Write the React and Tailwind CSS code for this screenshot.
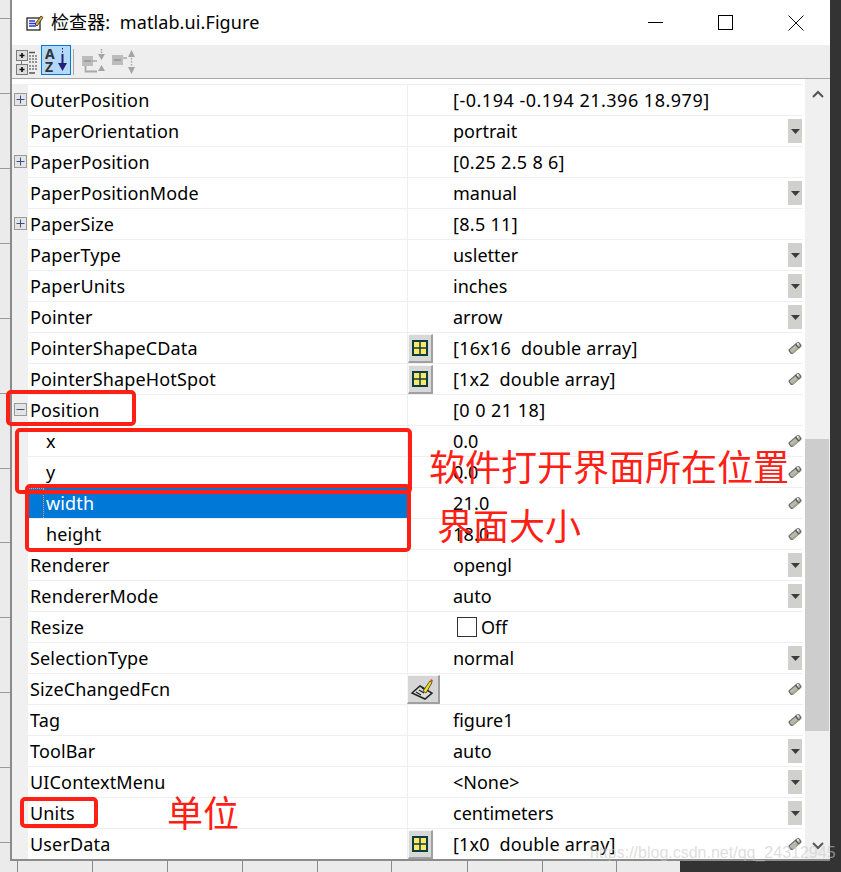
const rows = [
  { n: "OuterPosition", v: "[-0.194 -0.194 21.396 18.979]", exp: "+", t: "tracking-[0.5px]" },
  { n: "PaperOrientation", v: "portrait", r: "dd" },
  { n: "PaperPosition", v: "[0.25 2.5 8 6]", exp: "+", t: "tracking-[0.3px]" },
  { n: "PaperPositionMode", v: "manual", r: "dd" },
  { n: "PaperSize", v: "[8.5 11]", exp: "+", t: "tracking-[0.3px]" },
  { n: "PaperType", v: "usletter", r: "dd" },
  { n: "PaperUnits", v: "inches", r: "dd" },
  { n: "Pointer", v: "arrow", r: "dd" },
  { n: "PointerShapeCData", v: "[16x16  double array]", r: "pen", btn: "grid", t: "tracking-[0.25px]" },
  { n: "PointerShapeHotSpot", v: "[1x2  double array]", r: "pen", btn: "grid", t: "tracking-[0.2px]" },
  { n: "Position", v: "[0 0 21 18]", exp: "-", t: "tracking-[0.45px]" },
  { n: "x", v: "0.0", r: "pen", sub: true },
  { n: "y", v: "0.0", r: "pen", sub: true },
  { n: "width", v: "21.0", r: "pen", sub: true, sel: true, t: "tracking-[0.2px]" },
  { n: "height", v: "18.0", r: "pen", sub: true, t: "tracking-[0.2px]" },
  { n: "Renderer", v: "opengl", r: "dd" },
  { n: "RendererMode", v: "auto", r: "dd" },
  { n: "Resize", v: "Off", check: true },
  { n: "SelectionType", v: "normal", r: "dd" },
  { n: "SizeChangedFcn", v: "", r: "pen", btn: "cb" },
  { n: "Tag", v: "figure1", r: "pen" },
  { n: "ToolBar", v: "auto", r: "dd" },
  { n: "UIContextMenu", v: "<None>", r: "dd" },
  { n: "Units", v: "centimeters", r: "dd" },
  { n: "UserData", v: "[1x0  double array]", r: "pen", btn: "grid", t: "tracking-[0.2px]" },
];

function Expander({ kind }) {
  return (
    <svg width="13" height="13" viewBox="0 0 13 13">
      <rect x="0.5" y="0.5" width="12" height="12" fill="#e4e4e4" stroke="#9a9a9a" />
      <path d={kind === "+" ? "M2.5 6.5h8M6.5 2.5v8" : "M2.5 6.5h8"} stroke="#3b4f86" strokeWidth="1" />
    </svg>
  );
}

function Dropdown() {
  return (
    <div className="w-[14px] h-[24px] bg-[#d0d0cc] flex items-center justify-center">
      <svg width="9" height="5" viewBox="0 0 9 5"><path d="M0 0h9L4.5 5z" fill="#3c3c3c" /></svg>
    </div>
  );
}

function Pencil() {
  return (
    <svg width="16" height="16" viewBox="0 0 16 16">
      <g transform="rotate(-40 8 8)">
        <rect x="0" y="4.500" width="16" height="7" rx="2.500" fill="#6f6f6a" />
        <rect x="1.500" y="5.800" width="13" height="4.200" rx="1.500" fill="#b9b9b4" />
        <rect x="10.500" y="4.800" width="1.500" height="6.400" fill="#55554f" />
        <rect x="12.500" y="5.500" width="2" height="2" fill="#f2f2ee" />
        <rect x="2" y="9.800" width="9" height="1.600" fill="#a8a87e" />
      </g>
    </svg>
  );
}

function GridBtn() {
  return (
    <div className="w-[25px] h-[29px] mt-[1px] flex items-center justify-center bg-[#d8d8d8] border-r-2 border-b-2 border-l border-t border-r-[#a0a0a0] border-b-[#a0a0a0] border-l-[#f6f6f6] border-t-[#f6f6f6]">
      <svg width="16" height="16" viewBox="0 0 16 16">
        <rect x="1" y="1" width="14" height="14" fill="#f8e96a" stroke="#103c40" strokeWidth="2" />
        <path d="M8 1v14M1 8h14" stroke="#103c40" strokeWidth="1.500" />
      </svg>
    </div>
  );
}

function CallbackBtn() {
  return (
    <div className="w-[33px] h-[29px] mt-[1px] -ml-[1px] flex items-center justify-center bg-[#d6d6d6] border-r-2 border-b-2 border-l border-t border-r-[#a0a0a0] border-b-[#a0a0a0] border-l-[#f6f6f6] border-t-[#f6f6f6]">
      <svg width="26" height="22" viewBox="0 0 26 22">
        <path d="M2 15 10 8l12 7-7 6z" fill="#dcdcdc" stroke="#222" strokeWidth="1.500" />
        <path d="M6 14l5 3M9 12l5 3M12 10l5 3" stroke="#222" strokeWidth="1.200" />
        <path d="M13 13 20 3l2 1.500L16 15z" fill="#f2e11a" stroke="#333" strokeWidth="0.800" />
        <path d="M20 3l1-2 2 1.500-1 2z" fill="#e0482a" />
      </svg>
    </div>
  );
}

function Row({ row }) {
  return (
    <div className="flex h-[31px] shrink-0">
      <div className="w-[16px] bg-[#f0f0f0] flex items-center justify-center shrink-0">
        {row.exp && <Expander kind={row.exp} />}
      </div>
      <div
        className={`relative w-[379px] shrink-0 border-t flex items-center text-[18px] leading-none tracking-[0.15px] ${
          row.sel ? "bg-[#0078d7] border-t-[#f2f2f2] text-white" : "border-t-[#efefef] text-black"
        } ${row.sub ? "pl-[18px]" : "pl-[2px]"}`}
      >
        {row.sel && <div className="absolute left-0 top-0 bottom-0 w-[16px] border-t border-r border-dotted border-t-[#e8a060] border-r-[#e8a060]" />}
        {row.n}
      </div>
      <div className="w-[1px] bg-[#efefef] shrink-0" />
      <div className="relative flex-1 border-t border-t-[#efefef] flex items-center text-[18px] leading-none text-black">
        <div className="w-[45px] shrink-0 self-start">
          {row.btn === "grid" && <GridBtn />}
          {row.btn === "cb" && <CallbackBtn />}
        </div>
        {row.check ? (
          <div className="flex items-center ml-[4px] gap-[4px]">
            <div className="w-[20px] h-[20px] border border-[#333] bg-white" />
            <span>{row.v}</span>
          </div>
        ) : (
          <span className={`whitespace-pre ${row.t || ""}`}>{row.v}</span>
        )}
        <div className="ml-auto flex items-center justify-center w-[14px] mr-[1px]">
          {row.r === "dd" && <Dropdown />}
          {row.r === "pen" && <Pencil />}
        </div>
      </div>
    </div>
  );
}

function TreeIcon() {
  return (
    <svg width="22" height="26" viewBox="0 0 22 26">
      <path d="M5.500 11v5" stroke="#777" />
      <rect x="0.500" y="1.500" width="11" height="10" fill="#dedede" stroke="#7a7a7a" />
      <rect x="0.500" y="15.500" width="11" height="10" fill="#dedede" stroke="#7a7a7a" />
      <path d="M3.500 6.500h5M6 4v5M3.500 20.500h5M6 18v5" stroke="#111" strokeWidth="1.600" />
      <path d="M13 3.500h6M13 24h6" stroke="#555" strokeWidth="1.500" />
      <path d="M13 7h8M13 10h8M13 13h8M13 17h8M13 20h8" stroke="#777" strokeWidth="1.300" strokeDasharray="2 1" />
    </svg>
  );
}

function MoveIconDown() {
  return (
    <svg width="25" height="26" viewBox="0 0 25 26">
      <rect x="1" y="7" width="11" height="10" fill="#bcbcbc" />
      <path d="M3 12h7" stroke="#959595" strokeWidth="1.500" />
      <path d="M4.500 17v5.500H16" stroke="#a8a8a8" strokeWidth="1.800" fill="none" />
      <path d="M11 12h5" stroke="#a8a8a8" strokeWidth="1.500" />
      <path d="M17 5h7l-3.500 6zM17 22h7l-3.500-6z" fill="#a4a4a4" />
      <path d="M20.500 0v4" stroke="#a4a4a4" strokeWidth="1.500" strokeDasharray="1.500 1" />
    </svg>
  );
}

function MoveIconUp() {
  return (
    <svg width="25" height="27" viewBox="0 0 25 27">
      <rect x="1" y="7" width="11" height="10" fill="#bcbcbc" />
      <path d="M3 12h7" stroke="#959595" strokeWidth="1.500" />
      <path d="M12 10h4" stroke="#a8a8a8" strokeWidth="1.500" />
      <path d="M17 9h7L20.500 2zM17 19h7L20.500 26z" fill="#a4a4a4" />
      <path d="M20.500 10v8" stroke="#a4a4a4" strokeWidth="1.400" strokeDasharray="1.500 1.500" />
    </svg>
  );
}

function TitleIcon() {
  return (
    <svg width="18" height="18" viewBox="0 0 18 18">
      <rect x="1" y="4" width="13" height="12" fill="#fff" stroke="#111" strokeWidth="1.200" />
      <path d="M3 7h6M3 9.500h7M3 12h7" stroke="#2a35d8" strokeWidth="1.300" />
      <path d="M9 10 15 2l2 1.500L11 12z" fill="#d8b040" stroke="#222" strokeWidth="0.800" />
    </svg>
  );
}

function RedBox({ className }) {
  return <div className={`absolute border-[4px] border-[#ff2015] rounded-[5px] ${className}`} />;
}

export default function App() {
  return (
    <div
      className="relative w-[841px] h-[872px] overflow-hidden bg-[#ebebeb]"
      style={{ fontFamily: '"Noto Sans", "Noto Sans CJK SC", sans-serif' }}
    >
      <svg className="absolute inset-0" width="841" height="872">
        {[18, 93, 168, 243, 318, 393, 468, 542, 617, 692, 767, 842].map((y) => (
          <path key={y} d={`M0 ${y}.5H10`} stroke="#9a9a9a" />
        ))}
        {[17, 92, 167, 242, 317, 391, 467, 542, 616].map((x) => (
          <path key={x} d={`M${x}.5 860V872`} stroke="#8a8a8a" />
        ))}
        <rect x="680" y="860" width="161" height="12" fill="#333333" />
        <rect x="830" y="0" width="11" height="872" fill="#333333" />
        <rect x="680" y="0" width="161" height="1" fill="#333333" />
      </svg>

      <div className="relative ml-[10px] w-[820px] h-[861px] bg-white border-l-2 border-b-2 border-[#8b8b8b] flex flex-col">
        <div className="h-[45px] flex items-center shrink-0">
          <div className="ml-[14px] w-[18px] flex"><TitleIcon /></div>
          <span className="ml-[7px] mb-[2px] text-[18px] tracking-[0.1px] text-black leading-none">检查器:&nbsp;&nbsp;matlab.ui.Figure</span>
          <div className="ml-auto flex items-center h-full">
            <div className="w-[70px] flex justify-center"><div className="w-[15px] h-[1px] bg-black" /></div>
            <div className="w-[70px] flex justify-center mr-[1px]"><div className="w-[15px] h-[15px] border border-black" /></div>
            <div className="w-[69px] flex justify-center">
              <svg width="16" height="16" viewBox="0 0 16 16"><path d="M.5.500l15 15M15.500.500l-15 15" stroke="#111" /></svg>
            </div>
          </div>
        </div>

        <div className="h-[34px] bg-[#eeeeee] border-b border-b-[#a8a8a8] flex items-center shrink-0">
          <div className="ml-[3px] w-[24px] flex justify-center"><TreeIcon /></div>
          <div className="self-start ml-[2px] w-[30px] h-[30px] bg-[#b3d9f7] border border-[#0078d7] relative flex flex-col items-start pl-[3px] pt-[1px] text-[#333] text-[14px] font-bold leading-[13px]">
            <span>A</span>
            <span>Z</span>
            <svg className="absolute right-[3px] top-[2px]" width="9" height="25" viewBox="0 0 9 25">
              <path d="M4.500 0v6" stroke="#22227a" strokeDasharray="1.500 1.500" />
              <path d="M4.500 6v12" stroke="#22227a" strokeWidth="2" />
              <path d="M0 15h9l-4.500 8z" fill="#22227a" />
            </svg>
          </div>
          <div className="ml-[2px] w-[1px] h-[26px] bg-[#a8a8a8]" />
          <div className="ml-[7px] flex"><MoveIconDown /></div>
          <div className="ml-[5px] flex"><MoveIconUp /></div>
        </div>

        <div className="flex flex-1 min-h-0 pt-[5px]">
          <div className="flex flex-col w-[791px] shrink-0">
            {rows.map((row) => (
              <Row key={row.n} row={row} />
            ))}
          </div>
          <div className="-mt-[5px] ml-[2px] w-[25px] bg-[#f0f0f0] flex flex-col items-center relative">
            <svg className="mt-[11px]" width="12" height="8" viewBox="0 0 12 8"><path d="M1 7l5-5 5 5" fill="none" stroke="#555" strokeWidth="2" /></svg>
            <div className="absolute left-0 right-[1px] top-[360px] h-[292px] bg-[#cdcdcd]" />
            <svg className="mt-auto mb-[9px]" width="12" height="8" viewBox="0 0 12 8"><path d="M1 1l5 5 5-5" fill="none" stroke="#555" strokeWidth="2" /></svg>
          </div>
        </div>
      </div>

      <RedBox className="left-[6px] top-[390px] w-[130px] h-[36px]" />
      <RedBox className="left-[15px] top-[428px] w-[397px] h-[66px]" />
      <RedBox className="left-[25px] top-[484px] w-[386px] h-[68px]" />
      <RedBox className="left-[20px] top-[797px] w-[78px] h-[31px]" />

      <span className="absolute left-[429px] top-[441px] text-[36px] leading-[48px] text-[#ff2015] whitespace-nowrap" style={{ fontFamily: '"Noto Sans CJK SC", sans-serif' }}>软件打开界面所在位置</span>
      <span className="absolute left-[437px] top-[500px] text-[36px] leading-[48px] text-[#ff2015] whitespace-nowrap" style={{ fontFamily: '"Noto Sans CJK SC", sans-serif' }}>界面大小</span>
      <span className="absolute left-[167px] top-[787px] text-[36px] leading-[48px] text-[#ff2015] whitespace-nowrap" style={{ fontFamily: '"Noto Sans CJK SC", sans-serif' }}>单位</span>
      <span className="absolute left-[590px] top-[842px] text-[16px] leading-[22px] text-[#c8c8c8]/60 whitespace-nowrap" style={{ fontFamily: '"Liberation Sans", sans-serif' }}>https://blog.csdn.net/qq_24312945</span>
    </div>
  );
}
